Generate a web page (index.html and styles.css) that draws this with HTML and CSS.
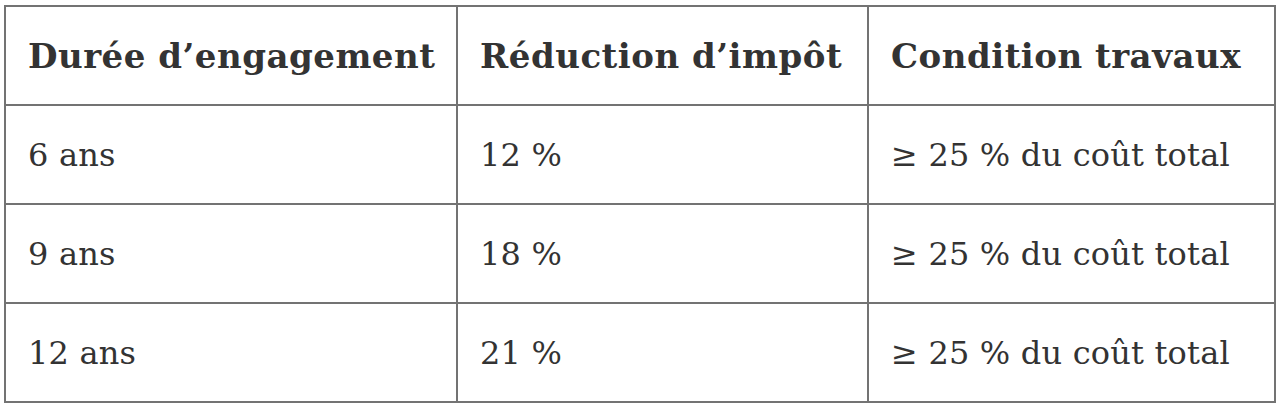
FILE: index.html
```html
<!DOCTYPE html>
<html lang="fr">
<head>
    <meta charset="UTF-8">
    <meta name="viewport" content="width=device-width, initial-scale=1.0">
    <title>Déficit foncier – engagement</title>
    <link rel="stylesheet" href="styles.css">
</head>
<body>
    <table class="rates">
        <thead>
            <tr>
                <th class="col-duree">Durée d’engagement</th>
                <th class="col-reduc">Réduction d’impôt</th>
                <th class="col-cond">Condition travaux</th>
            </tr>
        </thead>
        <tbody>
            <tr>
                <td>6 ans</td>
                <td>12 %</td>
                <td>≥ 25 % du coût total</td>
            </tr>
            <tr>
                <td>9 ans</td>
                <td>18 %</td>
                <td>≥ 25 % du coût total</td>
            </tr>
            <tr>
                <td>12 ans</td>
                <td>21 %</td>
                <td>≥ 25 % du coût total</td>
            </tr>
        </tbody>
    </table>
</body>
</html>
```

FILE: styles.css
```css
* {
    margin: 0;
    padding: 0;
    box-sizing: border-box;
}

body {
    background: #ffffff;
    padding: 5px 4px;
    font-family: 'DejaVu Serif', 'Liberation Serif', serif;
    color: #333333;
}

.rates {
    width: 1270px;
    border-collapse: collapse;
    table-layout: fixed;
}

.rates th,
.rates td {
    border: 2px solid #737373;
    text-align: left;
    vertical-align: middle;
    padding: 0 20px 0 22px;
    line-height: 40px;
    white-space: nowrap;
}

.rates th {
    height: 99px;
    font-size: 34px;
    font-weight: bold;
    letter-spacing: 0.5px;
}

.rates td {
    height: 99px;
    font-size: 32px;
    font-weight: normal;
    letter-spacing: 0.2px;
}

.col-duree {
    width: 452px;
}

.col-reduc {
    width: 411px;
}

.col-cond {
    width: 407px;
}
```
